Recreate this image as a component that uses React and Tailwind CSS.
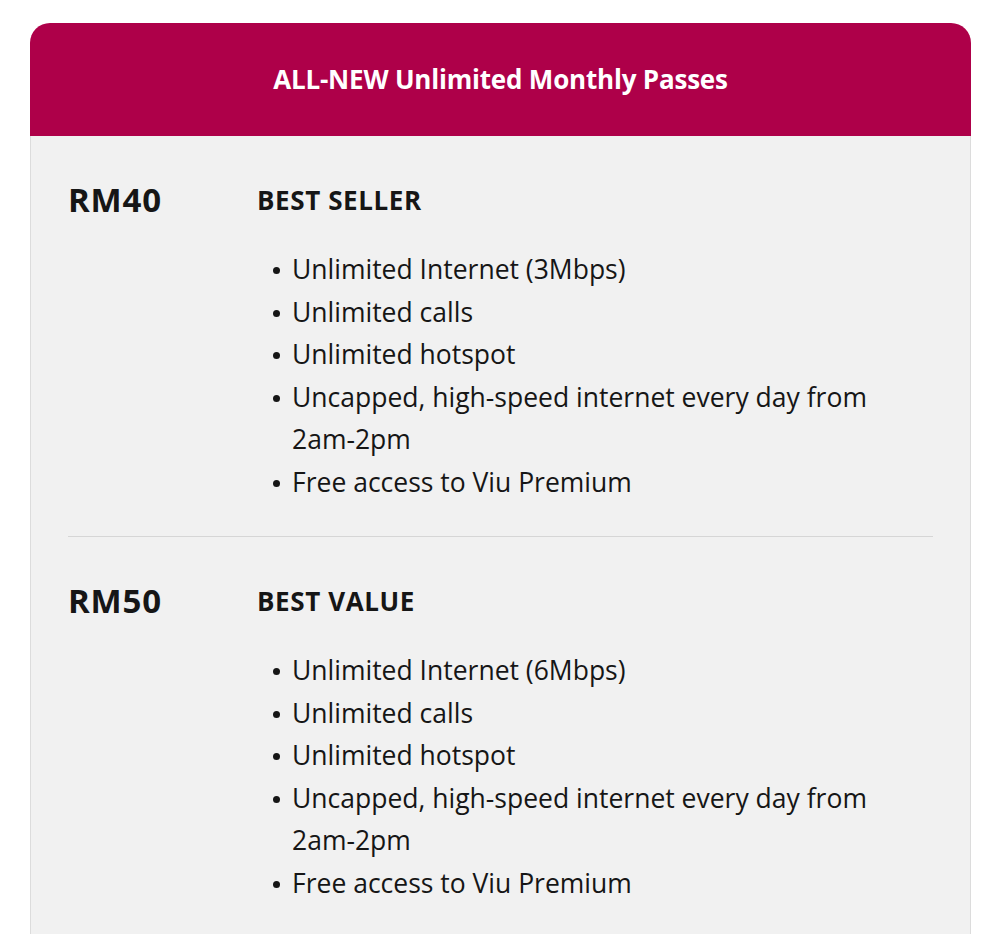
const PLANS = [
  {
    price: 'RM40',
    label: 'BEST SELLER',
    items: [
      'Unlimited Internet (3Mbps)',
      'Unlimited calls',
      'Unlimited hotspot',
      'Uncapped, high-speed internet every day from 2am-2pm',
      'Free access to Viu Premium',
    ],
  },
  {
    price: 'RM50',
    label: 'BEST VALUE',
    items: [
      'Unlimited Internet (6Mbps)',
      'Unlimited calls',
      'Unlimited hotspot',
      'Uncapped, high-speed internet every day from 2am-2pm',
      'Free access to Viu Premium',
    ],
  },
];

export default function App() {
  return (
    <div className="min-h-screen bg-white pt-[23px] px-[30px] text-[#161616]" style={{ fontFamily: '"Open Sans", "Noto Sans", sans-serif' }}>
      <div className="w-[941px]">
        {/* Header */}
        <div className="h-[113px] rounded-t-[20px] bg-[#ae0049] flex items-center justify-center">
          <h1 className="text-white text-[26px] font-bold tracking-[-0.2px]">ALL-NEW Unlimited Monthly Passes</h1>
        </div>

        {/* Plans */}
        <div className="bg-[#f1f1f1] border-x border-[#dcdcdc] px-[37px] pb-[60px]">
          {PLANS.map((p, i) => (
            <div key={p.price} className={i > 0 ? 'border-t border-[#d6d6d6]' : ''}>
              <div className="flex pt-[44px] pb-[33px]">
                <div className="w-[189px] text-[33px] font-bold leading-[40px] tracking-[0.8px]">{p.price}</div>
                <div className="flex-1">
                  <div className="text-[26px] font-bold leading-[40px] tracking-[0.6px]">{p.label}</div>
                  <ul className="mt-[28px] pl-[16px] w-[635px] text-[26.5px] leading-[42.5px]">
                    {p.items.map(it => (
                      <li key={it} className="relative pl-[19px]">
                        <span className="absolute left-0 top-[19px] w-[7px] h-[7px] rounded-full bg-[#161616]" />
                        {it}
                      </li>
                    ))}
                  </ul>
                </div>
              </div>
            </div>
          ))}
        </div>
      </div>
    </div>
  );
}
